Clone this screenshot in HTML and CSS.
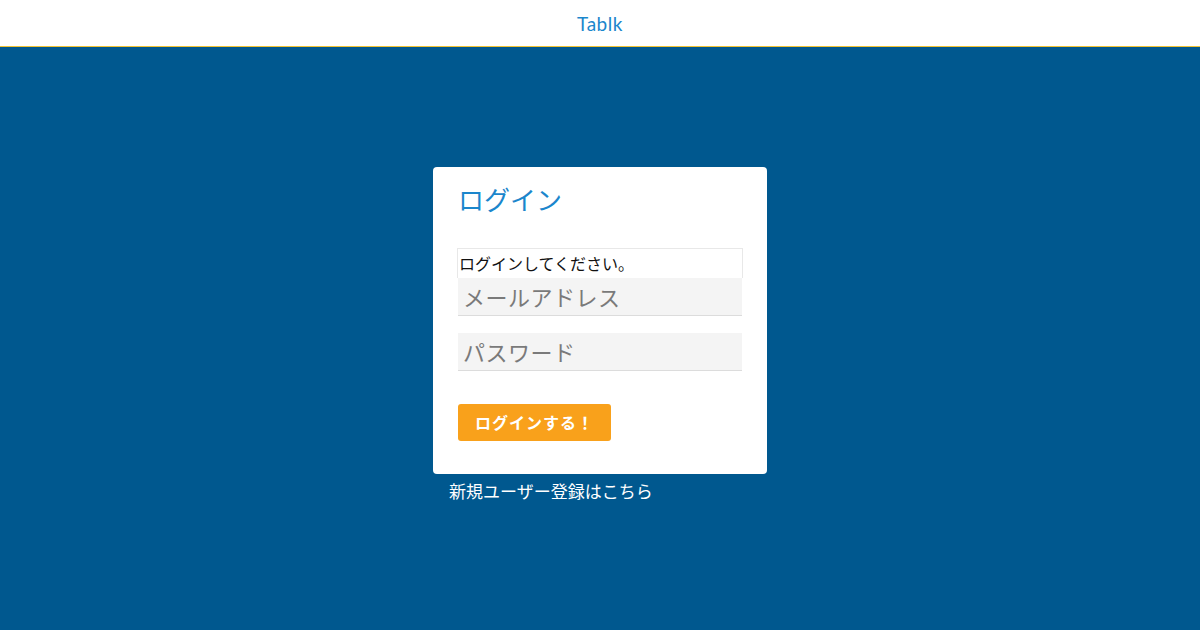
FILE: index.html
```html
<!DOCTYPE html>
<html lang="ja">
<head>
  <meta charset="UTF-8">
  <meta name="viewport" content="width=device-width, initial-scale=1.0">
  <title>Tablk - ログイン</title>
  <link rel="stylesheet" href="styles.css">
</head>
<body>
  <header>
    <div class="logo">Tablk</div>
  </header>

  <main>
    <div class="wrap">
      <div class="card">
        <h2>ログイン</h2>
        <form>
          <div class="notice">ログインしてください。</div>
          <input type="email" placeholder="メールアドレス">
          <input type="password" placeholder="パスワード" class="pass">
          <button type="button">ログインする！</button>
        </form>
      </div>
      <a href="#" class="signup">新規ユーザー登録はこちら</a>
    </div>
  </main>
</body>
</html>
```

FILE: styles.css
```css
body {
  font-family: "Noto Sans CJK JP", "Noto Sans", sans-serif;
  background: #00588f;
  margin: 0;
  padding: 0;
}

header {
  background: #ffffff;
  height: 46px;
  border-bottom: 1px solid #f1c232;
  display: flex;
  align-items: center;
  justify-content: center;
}

.logo {
  font-family: "Lato", sans-serif;
  font-size: 19px;
  color: #1b86cc;
  letter-spacing: 0.5px;
}

main {
  display: flex;
  justify-content: center;
  padding-top: 120px;
}

.wrap {
  width: 334px;
}

.card {
  background: #ffffff;
  border-radius: 4px;
  padding: 16px 24px 33px;
}

h2 {
  margin: 0 0 33px 1px;
  font-weight: normal;
  font-size: 26px;
  line-height: 32px;
  color: #1b86cc;
}

form {
  display: flex;
  flex-direction: column;
  align-items: flex-start;
}

.notice {
  box-sizing: border-box;
  width: 286px;
  height: 30px;
  border: 1px solid #e8e8e8;
  border-bottom: none;
  padding-left: 1px;
  font-size: 16px;
  line-height: 28px;
  color: #111;
}

input {
  box-sizing: border-box;
  width: 284px;
  height: 38px;
  margin: 0 1px;
  border: none;
  border-bottom: 1px solid #dcdcdc;
  background: #f4f4f4;
  padding: 0 5px 2px;
  font-family: "Noto Sans CJK JP", sans-serif;
  font-size: 22px;
  letter-spacing: 0.5px;
  outline: none;
}

input::placeholder {
  color: #7a7a7a;
}

.pass {
  margin-top: 17px;
}

button {
  margin: 33px 0 0 1px;
  height: 37px;
  padding: 0 17px 1px;
  border: none;
  border-radius: 3px;
  background: #f9a11b;
  color: #ffffff;
  font-family: "Noto Sans CJK JP", sans-serif;
  font-weight: bold;
  font-size: 16px;
  letter-spacing: 1px;
}

.signup {
  display: block;
  margin: 5px 0 0 16px;
  color: #ffffff;
  text-decoration: none;
  font-size: 17px;
  line-height: 24px;
}
```
